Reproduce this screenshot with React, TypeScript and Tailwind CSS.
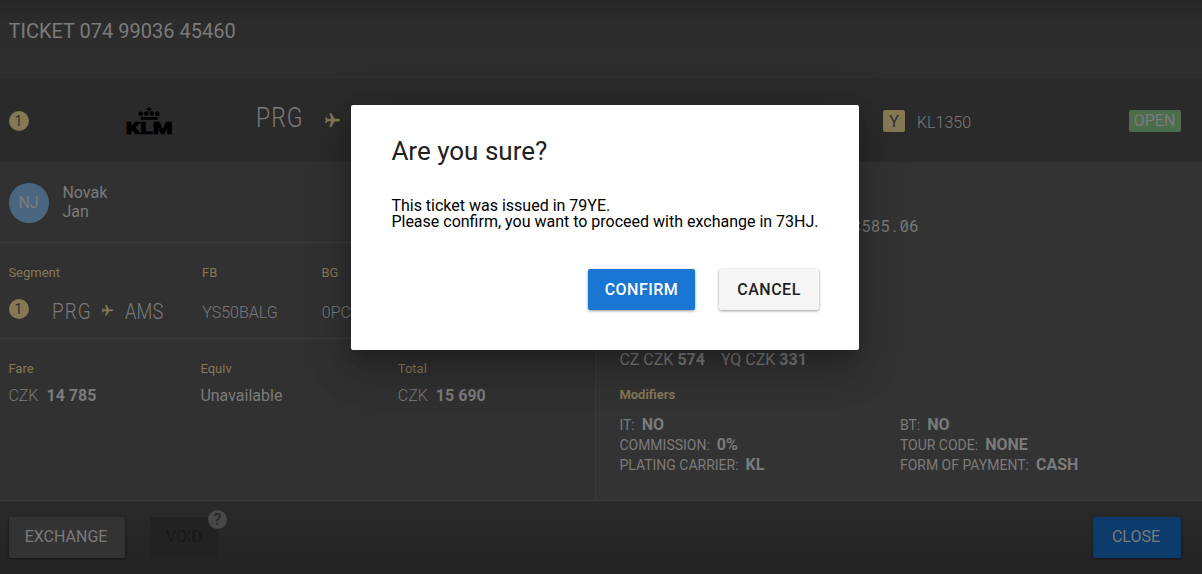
import type { ReactNode } from "react";

const Plane = ({ size }: { size: number }) => (
  <svg width={size} height={size} viewBox="0 0 24 24" className="shrink-0 rotate-90 fill-[#857955]">
    <path stroke="#857955" strokeWidth="0.700" d="M21 16v-2l-8-5V3.500a1.500 1.500 0 0 0-3 0V9l-8 5v2l8-2.500V19l-2 1.500V22l3.500-1 3.500 1v-1.500L13 19v-5.500z" />
  </svg>
);

const KlmLogo = () => (
  <svg width="52" height="40" viewBox="-2 -6 52 40" className="-mx-0.5 shrink-0 fill-black">
    <path d="M23.300 0h1.500v1.500h1.700V3h-1.700v1.600h-1.500V3h-1.700V1.500h1.700z" />
    <circle cx="15.800" cy="6.800" r="2.300" />
    <circle cx="21.300" cy="6.600" r="2.300" />
    <circle cx="26.900" cy="6.600" r="2.300" />
    <circle cx="32.400" cy="6.800" r="2.300" />
    <rect x="15.700" y="10" width="16.800" height="2.800" />
    <text x="0.800" y="26.700" textLength="46.800" lengthAdjust="spacingAndGlyphs" className="font-['Roboto'] text-[16px] font-black" stroke="black" strokeWidth="0.600">KLM</text>
  </svg>
);

const Badge = () => (
  <span className="flex size-5 shrink-0 items-center justify-center rounded-full bg-[#857955] pr-px text-[14px] leading-5 text-[#2f2f2f]">1</span>
);

const Label = ({ children, className = "" }: { children: ReactNode; className?: string }) => (
  <div className={`text-[13px] leading-4 text-[#857955] ${className}`}>{children}</div>
);

const Amount = ({ label, children }: { label: string; children: ReactNode }) => (
  <div>
    <Label>{label}</Label>
    <div className="mt-[9px] text-[16px] leading-5">{children}</div>
  </div>
);

const Modifier = ({ name, value }: { name: string; value: string }) => (
  <div className="flex items-baseline gap-[7px] leading-5">
    <span className="text-[14px]">{name}:</span>
    <b className="text-[16px] font-bold">{value}</b>
  </div>
);

export default function App() {
  return (
    <div className="relative flex h-[574px] w-[1202px] flex-col overflow-hidden bg-[#313131] font-['Roboto',sans-serif] text-[16px] text-[#7b7b7b]">
      <header className="h-[79px] bg-linear-to-b from-[#262626] via-[#2c2c2c] via-30% to-[#2e2e2e] pt-[19px] pl-[8.600px] text-[20px] leading-6">
        TICKET 074 99036 45460
      </header>

      <section className="flex h-[84px] items-center border-b border-[#353535] bg-[#2a2a2a] pl-[9px]">
        <Badge />
        <div className="ml-24 flex w-[131px]"><KlmLogo /></div>
        <span className="mb-[5px] w-[68px] origin-left scale-x-[0.850] text-[27px] leading-8 font-light tracking-[1.200px]">PRG</span>
        <Plane size={17} />
        <div className="ml-[542px] flex items-center">
          <span className="flex size-[22px] items-center justify-center rounded-[2px] bg-[#857955] pt-[2px] leading-5 text-[#2f2f2f]">Y</span>
          <span className="ml-3 w-[212px] pt-[4px] font-light">KL1350</span>
          <span className="h-[22px] w-[52px] rounded-[2px] bg-[#4b6d4e] pr-px text-center leading-[21px]">OPEN</span>
        </div>
      </section>

      <main className="flex h-[337px]">
        <div className="w-[596px] border-r border-[#3b3b3b]">
          <div className="flex h-[80px] items-center border-b border-[#3b3b3b] pl-[9px]">
            <span className="flex size-10 items-center justify-center rounded-full bg-[#4b677f] pt-px pr-px text-[#7b7b7b]">NJ</span>
            <div className="ml-[13.400px] pb-[2px] leading-[19px]">
              <div>Novak</div>
              <div>Jan</div>
            </div>
          </div>

          <div className="h-[96px] border-b border-[#3b3b3b] pt-[22px] pl-[8.400px]">
            <div className="flex">
              <Label className="w-[193.600px]">Segment</Label>
              <Label className="w-[119.500px]">FB</Label>
              <Label>BG</Label>
            </div>
            <div className="mt-[16px] flex h-[28px] items-center">
              <div className="mb-[4px] ml-[0.600px]"><Badge /></div>
              <span className="mt-[1px] ml-[23px] w-[49px] origin-left scale-x-[0.860] text-[22px] leading-7 font-light tracking-[1.200px]">PRG</span>
              <div className="mb-[2px] flex"><Plane size={13} /></div>
              <span className="mt-[1px] ml-[11px] w-[77.300px] origin-left scale-x-[0.830] text-[22px] leading-7 font-light tracking-[0.200px]">AMS</span>
              <span className="mt-1 w-[119.500px] font-light">YS50BALG</span>
              <span className="mt-1 font-light">0PC</span>
            </div>
          </div>

          <div className="grid grid-cols-[192px_197.400px_1fr] pt-[22px] pl-[8.400px]">
            <Amount label="Fare"><span className="mr-2 font-light">CZK</span><b>14 785</b></Amount>
            <Amount label="Equiv">Unavailable</Amount>
            <Amount label="Total"><span className="mr-2 font-light">CZK</span><b>15 690</b></Amount>
          </div>
        </div>

        <div className="flex flex-1 flex-col bg-[#333333] pl-[23.400px]">
          <div className="mt-[54px] ml-[208px] flex h-5 leading-5 tracking-[0.600px]">
            <span className="relative">
              NUC585<span className="inline-block w-[9.600px] text-center">.</span>06
              <span className="absolute top-[9px] right-[11px] h-px w-[8px] -rotate-[60deg] bg-[#7b7b7b]" />
            </span>
          </div>
          <div className="mt-[113px] flex gap-4 leading-5">
            <span>CZ CZK <b>574</b></span>
            <span>YQ CZK <b>331</b></span>
          </div>
          <Label className="mt-[17px] font-bold">Modifiers</Label>
          <div className="mt-[12px] grid grid-cols-[280.500px_1fr]">
            <Modifier name="IT" value="NO" />
            <Modifier name="BT" value="NO" />
            <Modifier name="COMMISSION" value="0%" />
            <Modifier name="TOUR CODE" value="NONE" />
            <Modifier name="PLATING CARRIER" value="KL" />
            <Modifier name="FORM OF PAYMENT" value="CASH" />
          </div>
        </div>
      </main>

      <footer className="flex flex-1 items-start border-t border-[#3d3d3d] bg-linear-to-b from-[#2a2a2a] to-[#232323] pt-[16px] pr-[21px] pl-[9px]">
        <button className="h-[41px] w-[116px] rounded-[2px] bg-[#333333] pr-[2px] pb-[2px] shadow-[0_1px_3px_rgba(0,0,0,0.5)]">EXCHANGE</button>
        <div className="relative ml-[25px]">
          <button className="h-[41px] w-[69px] rounded-[2px] bg-[#222222] pr-px pb-[2px] text-[#191919]">VOID</button>
          <span className="absolute -top-[7px] -right-2 flex size-[19px] items-center justify-center rounded-full bg-[#484848] text-[16px] leading-[19px] font-medium text-[#272727]">?</span>
        </div>
        <button className="ml-auto h-[41px] w-[88px] rounded-[2px] bg-[#0c3b6c] pr-[2px] pb-[2px] shadow-[0_1px_3px_rgba(0,0,0,0.5)]">CLOSE</button>
      </footer>

      <div className="absolute inset-0 flex items-start justify-center pt-[105px] pl-[8px]">
        <div role="dialog" className="h-[245px] w-[508px] rounded-[2px] bg-white px-10 pt-[28px] text-black shadow-[0_11px_15px_-7px_rgba(0,0,0,0.2),0_24px_38px_3px_rgba(0,0,0,0.14),0_9px_46px_8px_rgba(0,0,0,0.12)]">
          <h1 className="pl-[0.400px] text-[26px] leading-9 text-[#212121]">Are you sure?</h1>
          <p className="mt-[29px] pl-[0.400px] leading-4 whitespace-nowrap">
            This ticket was issued in 79YE.<br />
            Please confirm, you want to proceed with exchange in 73HJ.
          </p>
          <div className="mt-[39px] flex justify-end gap-6">
            <button className="h-[41px] w-[107px] rounded-[2px] bg-[#1976d2] font-medium tracking-[0.500px] text-white shadow-[0_1px_3px_rgba(0,0,0,0.4)]">CONFIRM</button>
            <button className="h-[41px] w-[100px] rounded-[2px] bg-[#f5f5f5] font-medium tracking-[0.500px] text-[#212121] shadow-[0_1px_3px_rgba(0,0,0,0.4)]">CANCEL</button>
          </div>
        </div>
      </div>
    </div>
  );
}
